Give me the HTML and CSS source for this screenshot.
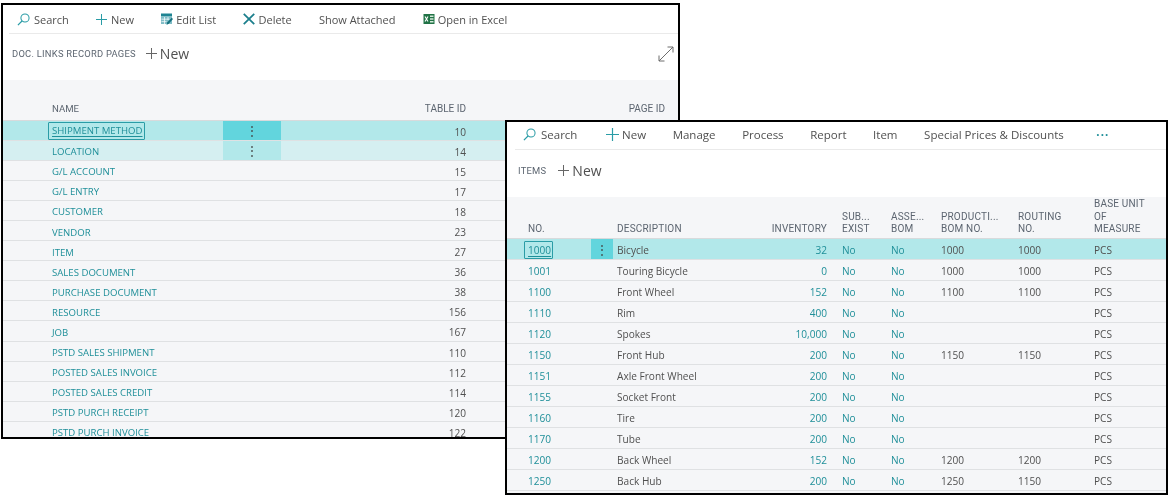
FILE: index.html
```html
<!DOCTYPE html>
<html lang="en">
<head>
  <meta charset="UTF-8">
  <title>Doc. Links Record Pages and Items</title>
  <link rel="stylesheet" href="styles.css">
</head>
<body>

<svg class="defs" width="0" height="0">
  <symbol id="i-search" viewBox="0 0 14 14"><circle cx="8.6" cy="5.4" r="4.4" fill="none" stroke="currentColor" stroke-width="1.1"/><path d="M5.4 8.6 1 13" stroke="currentColor" stroke-width="1.3" fill="none"/></symbol>
  <symbol id="i-plus" viewBox="0 0 12 12"><path d="M6 0v12M0 6h12" stroke="currentColor" stroke-width="1.1" fill="none"/></symbol>
</svg>

<div class="window window-pages">
  <div class="toolbar">
    <span class="action"><svg class="icon search"><use href="#i-search"/></svg>Search</span>
    <span class="action"><svg class="icon plus"><use href="#i-plus"/></svg>New</span>
    <span class="action">
      <svg class="icon edit" viewBox="0 0 12 12"><path d="M0 .5h11v3H0z" fill="#1f8492"/><path d="M0 3.500h11v7.500H0z" fill="#7fbcc6"/><path d="M3.500 4v7M7 4v3M.5 6.200h8M.5 8.600h5" stroke="#fff" stroke-width=".7"/><path d="M5.500 12l.8-2.800 4.400-4.400 1.300 1.300-4 4.400z" fill="#14707e"/></svg>Edit List</span>
    <span class="action"><svg class="icon close" viewBox="0 0 11 11"><path d="M.7.7l9.600 9.600M10.300.7.7 10.300" stroke="#1b7f8c" stroke-width="1.600" fill="none"/></svg>Delete</span>
    <span class="action">Show Attached</span>
    <span class="action"><svg class="icon excel" viewBox="0 0 12 12"><path d="M.5 1h11v10H.5z" fill="#217346"/><path d="M7 2.500h3.500v1.500H7zM7 5.200h3.500v1.500H7zM7 8h3.500v1.500H7z" fill="#d5eadb"/><path d="M2 3.500 5 8.500M5 3.500 2 8.500" stroke="#fff" stroke-width="1.100"/></svg>Open in Excel</span>
  </div>
  <div class="title-row">
    <span class="caption">DOC. LINKS RECORD PAGES</span>
    <span class="title-new"><svg class="icon plus-big"><use href="#i-plus"/></svg>New</span>
    <svg class="expand" viewBox="0 0 16 16"><path d="M1 15 15 1M9.500 1H15v5.500M1 9.500V15h5.500" stroke="#6d6d6d" stroke-width="1" fill="none"/></svg>
  </div>
  <div class="grid-area">
    <div class="row-pages head">
      <span class="name">NAME</span><span></span><span class="num">TABLE ID</span><span class="num">PAGE ID</span>
    </div>
    <div class="row-pages selected"><span class="name"><a class="link focus">SHIPMENT METHOD</a></span><span class="dots">⋮</span><span class="num">10</span><span></span></div>
    <div class="row-pages marked"><span class="name"><a class="link">LOCATION</a></span><span class="dots">⋮</span><span class="num">14</span><span></span></div>
    <div class="row-pages"><span class="name"><a class="link">G/L ACCOUNT</a></span><span></span><span class="num">15</span><span></span></div>
    <div class="row-pages"><span class="name"><a class="link">G/L ENTRY</a></span><span></span><span class="num">17</span><span></span></div>
    <div class="row-pages"><span class="name"><a class="link">CUSTOMER</a></span><span></span><span class="num">18</span><span></span></div>
    <div class="row-pages"><span class="name"><a class="link">VENDOR</a></span><span></span><span class="num">23</span><span></span></div>
    <div class="row-pages"><span class="name"><a class="link">ITEM</a></span><span></span><span class="num">27</span><span></span></div>
    <div class="row-pages"><span class="name"><a class="link">SALES DOCUMENT</a></span><span></span><span class="num">36</span><span></span></div>
    <div class="row-pages"><span class="name"><a class="link">PURCHASE DOCUMENT</a></span><span></span><span class="num">38</span><span></span></div>
    <div class="row-pages"><span class="name"><a class="link">RESOURCE</a></span><span></span><span class="num">156</span><span></span></div>
    <div class="row-pages"><span class="name"><a class="link">JOB</a></span><span></span><span class="num">167</span><span></span></div>
    <div class="row-pages"><span class="name"><a class="link">PSTD SALES SHIPMENT</a></span><span></span><span class="num">110</span><span></span></div>
    <div class="row-pages"><span class="name"><a class="link">POSTED SALES INVOICE</a></span><span></span><span class="num">112</span><span></span></div>
    <div class="row-pages"><span class="name"><a class="link">POSTED SALES CREDIT</a></span><span></span><span class="num">114</span><span></span></div>
    <div class="row-pages"><span class="name"><a class="link">PSTD PURCH RECEIPT</a></span><span></span><span class="num">120</span><span></span></div>
    <div class="row-pages"><span class="name"><a class="link">PSTD PURCH INVOICE</a></span><span></span><span class="num">122</span><span></span></div>
  </div>
</div>

<div class="window window-items">
  <div class="toolbar toolbar-wide">
    <span class="action"><svg class="icon search"><use href="#i-search"/></svg>Search</span>
    <span class="action"><svg class="icon plus"><use href="#i-plus"/></svg>New</span>
    <span class="action">Manage</span>
    <span class="action">Process</span>
    <span class="action">Report</span>
    <span class="action">Item</span>
    <span class="action">Special Prices &amp; Discounts</span>
    <span class="more">···</span>
  </div>
  <div class="title-row">
    <span class="caption">ITEMS</span>
    <span class="title-new"><svg class="icon plus-big"><use href="#i-plus"/></svg>New</span>
  </div>
  <div class="grid-area">
    <div class="row-items head">
      <span class="no">NO.</span><span></span><span class="desc">DESCRIPTION</span><span class="num">INVENTORY</span>
      <span class="yes">SUB...<br>EXIST</span><span>ASSE...<br>BOM</span><span>PRODUCTI...<br>BOM NO.</span><span>ROUTING<br>NO.</span><span>BASE UNIT<br>OF<br>MEASURE</span>
    </div>
    <div class="row-items selected"><span class="no"><a class="link focus">1000</a></span><span class="dots">⋮</span><span class="desc">Bicycle</span><span class="num link">32</span><span class="yes link">No</span><span class="link">No</span><span>1000</span><span>1000</span><span>PCS</span></div>
    <div class="row-items"><span class="no"><a class="link">1001</a></span><span></span><span class="desc">Touring Bicycle</span><span class="num link">0</span><span class="yes link">No</span><span class="link">No</span><span>1000</span><span>1000</span><span>PCS</span></div>
    <div class="row-items"><span class="no"><a class="link">1100</a></span><span></span><span class="desc">Front Wheel</span><span class="num link">152</span><span class="yes link">No</span><span class="link">No</span><span>1100</span><span>1100</span><span>PCS</span></div>
    <div class="row-items"><span class="no"><a class="link">1110</a></span><span></span><span class="desc">Rim</span><span class="num link">400</span><span class="yes link">No</span><span class="link">No</span><span></span><span></span><span>PCS</span></div>
    <div class="row-items"><span class="no"><a class="link">1120</a></span><span></span><span class="desc">Spokes</span><span class="num link">10,000</span><span class="yes link">No</span><span class="link">No</span><span></span><span></span><span>PCS</span></div>
    <div class="row-items"><span class="no"><a class="link">1150</a></span><span></span><span class="desc">Front Hub</span><span class="num link">200</span><span class="yes link">No</span><span class="link">No</span><span>1150</span><span>1150</span><span>PCS</span></div>
    <div class="row-items"><span class="no"><a class="link">1151</a></span><span></span><span class="desc">Axle Front Wheel</span><span class="num link">200</span><span class="yes link">No</span><span class="link">No</span><span></span><span></span><span>PCS</span></div>
    <div class="row-items"><span class="no"><a class="link">1155</a></span><span></span><span class="desc">Socket Front</span><span class="num link">200</span><span class="yes link">No</span><span class="link">No</span><span></span><span></span><span>PCS</span></div>
    <div class="row-items"><span class="no"><a class="link">1160</a></span><span></span><span class="desc">Tire</span><span class="num link">200</span><span class="yes link">No</span><span class="link">No</span><span></span><span></span><span>PCS</span></div>
    <div class="row-items"><span class="no"><a class="link">1170</a></span><span></span><span class="desc">Tube</span><span class="num link">200</span><span class="yes link">No</span><span class="link">No</span><span></span><span></span><span>PCS</span></div>
    <div class="row-items"><span class="no"><a class="link">1200</a></span><span></span><span class="desc">Back Wheel</span><span class="num link">152</span><span class="yes link">No</span><span class="link">No</span><span>1200</span><span>1200</span><span>PCS</span></div>
    <div class="row-items"><span class="no"><a class="link">1250</a></span><span></span><span class="desc">Back Hub</span><span class="num link">200</span><span class="yes link">No</span><span class="link">No</span><span>1250</span><span>1150</span><span>PCS</span></div>
  </div>
</div>

</body>
</html>
```

FILE: styles.css
```css
html, body {
  margin: 0;
  height: 100%;
  background-color: #fff;
  overflow: hidden;
}

body {
  font-family: "Open Sans", "Noto Sans", sans-serif;
  font-size: 10.1px;
  color: #505050;
}

.defs {
  position: absolute;
}

/* the two screenshots sit on a free canvas */
.window {
  position: absolute;
  box-sizing: border-box;
  display: flex;
  flex-direction: column;
  overflow: hidden;
  background-color: #fff;
  border: 2px solid #000;
}

/* the source picture was scaled up, so its text is soft */
.window > div {
  filter: blur(.3px);
}

.window-pages {
  left: 1px;
  top: 3px;
  width: 679px;
  height: 436px;
}

.window-items {
  left: 505px;
  top: 120px;
  width: 663px;
  height: 375px;
}

.toolbar {
  display: flex;
  align-items: center;
  gap: 27.2px;
  height: 28px;
  flex: none;
  margin-left: 6px;
  font-size: 11px;
  border-bottom: 1px solid #eaeaea;
  white-space: nowrap;
}

.toolbar-wide {
  gap: 26.6px;
  font-size: 11.5px;
  height: 24px;
  padding-bottom: 3px;
  margin-left: 8px;
}

.action {
  display: flex;
  align-items: center;
}

.icon {
  flex: none;
  color: #2a9ca6;
}

.search {
  width: 13px;
  height: 13px;
  margin-right: 4px;
  margin-left: 8px;
}

.plus {
  width: 11px;
  height: 11px;
  margin-right: 4px;
}

.window-items .search {
  margin-right: 5px;
}

.window-items .plus {
  width: 13px;
  height: 13px;
  margin-right: 3px;
  margin-left: 2px;
}

.edit,
.close,
.excel {
  width: 12px;
  height: 12px;
  margin-right: 3px;
}

.more {
  margin-left: 6px;
  color: #1f8f99;
  font-weight: 700;
  letter-spacing: 1px;
}

.title-row {
  display: flex;
  align-items: center;
  flex: none;
  height: 46px;
  padding-left: 9px;
  padding-bottom: 7px;
  box-sizing: border-box;
}

.window-items .title-row {
  height: 47px;
  padding-left: 11px;
}

.caption {
  font-size: 9.4px;
  color: #5c6570;
  font-family: "Roboto", sans-serif;
  letter-spacing: .25px;
  margin-right: 10px;
}

.window-items .caption {
  margin-right: 12px;
}

.title-new {
  display: flex;
  align-items: center;
  font-size: 14px;
  color: #505050;
}

.plus-big {
  width: 11px;
  height: 11px;
  margin-right: 3px;
  color: #666;
}

.expand {
  width: 16px;
  height: 16px;
  margin-left: auto;
  margin-right: 4px;
}

.grid-area {
  flex: 1;
  background-color: #f5f6f8;
  min-height: 0;
}

.row-pages,
.row-items {
  display: grid;
  align-items: stretch;
  box-sizing: border-box;
  border-bottom: 1px solid #dfe1e3;
}

.row-pages {
  grid-template-columns: 220px 58px 185px 199px 1fr;
  height: 20.1px;
}

.row-items {
  grid-template-columns: 84px 22px 130px 84px 64px 50px 77px 76px 1fr;
  height: 21px;
}

.row-pages > span,
.row-items > span {
  display: flex;
  align-items: center;
  box-sizing: border-box;
  padding-top: 1px;
  min-width: 0;
  white-space: nowrap;
}

.row-pages > span {
  padding-top: 3px;
}

.row-pages > .dots {
  padding-top: 0;
}

.row-pages .name {
  padding-left: 49px;
  font-size: 9.6px;
}

.row-pages.head {
  height: 40.5px;
}

.row-items.head {
  height: 42px;
}

.head {
  border-bottom-color: #d8dadc;
}

.head > span {
  font-family: "Roboto", sans-serif;
  font-size: 10px;
  line-height: 12.5px;
  color: #5c6570;
  letter-spacing: .2px;
}

.row-pages.head > span {
  align-items: flex-end;
  padding-bottom: 4px;
  letter-spacing: 0;
}

.row-items.head > span {
  padding-bottom: 5px;
  display: block;
  align-self: end;
}

.num {
  justify-content: flex-end;
}

.row-items.head .num {
  text-align: right;
}

.no {
  padding-left: 21px;
}

.desc {
  padding-left: 4px;
}

.yes {
  padding-left: 15px;
}

.link {
  color: #1f8f99;
}

.focus {
  border: 1px solid #2a9ca6;
  border-radius: 1px;
  padding: 1px 1px 1px 3px;
  margin-left: -4px;
  text-decoration: underline;
  text-underline-offset: 2px;
  line-height: 14px;
}

.row-pages .focus {
  margin-top: -2px;
}

.selected {
  background-color: #b2e8ea;
}

.marked {
  background-color: #d5eff1;
}

.dots {
  justify-content: center;
  font-size: 12px;
  color: #444;
}

.selected .dots {
  background-color: #62d5dd;
}

.marked .dots {
  background-color: #b2e8ea;
}
```
